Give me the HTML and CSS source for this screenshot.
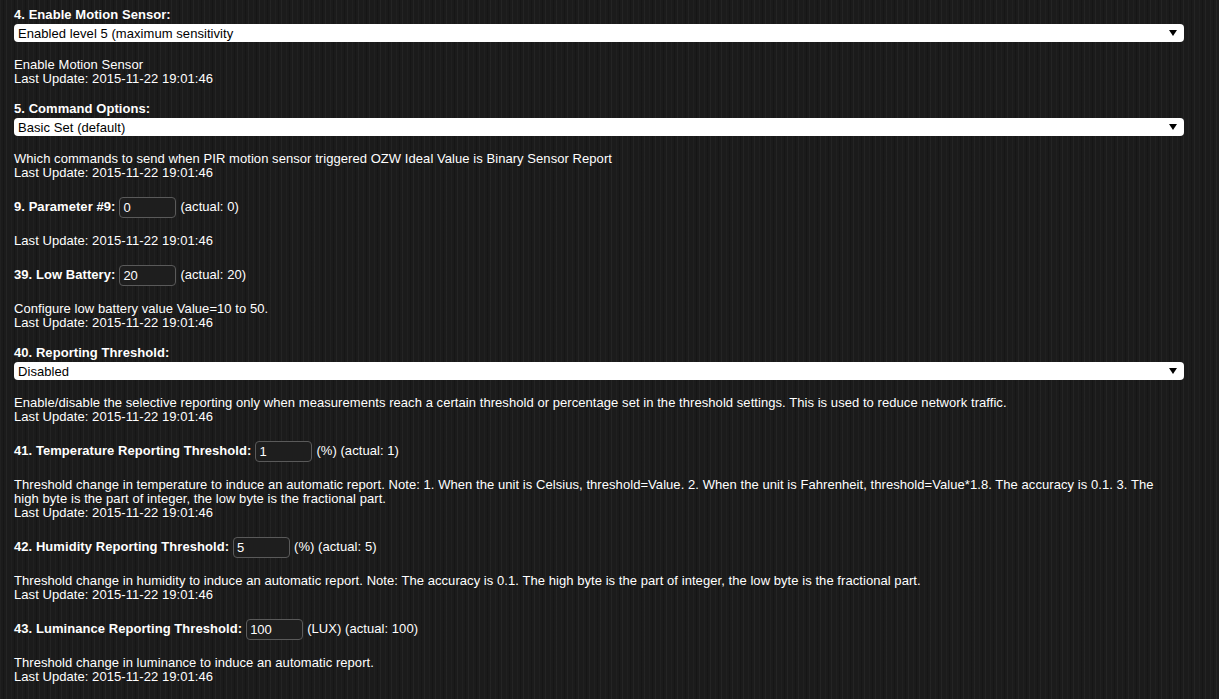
FILE: index.html
```html
<!DOCTYPE html>
<html lang="en">
<head>
    <meta charset="UTF-8">
    <title>Node Configuration</title>
    <link rel="stylesheet" href="styles.css">
</head>
<body>
    <div class="config">
        <div class="param">
            <label class="param-title" for="p4">4. Enable Motion Sensor:</label>
            <div class="select-wrap">
                <select id="p4" class="param-select">
                    <option>Enabled level 5 (maximum sensitivity</option>
                </select>
            </div>
            <p class="param-help">Enable Motion Sensor<br>Last Update: 2015-11-22 19:01:46</p>
        </div>

        <div class="param">
            <label class="param-title" for="p5">5. Command Options:</label>
            <div class="select-wrap">
                <select id="p5" class="param-select">
                    <option>Basic Set (default)</option>
                </select>
            </div>
            <p class="param-help">Which commands to send when PIR motion sensor triggered OZW Ideal Value is Binary Sensor Report<br>Last Update: 2015-11-22 19:01:46</p>
        </div>

        <div class="param">
            <div class="param-row">
                <label class="param-title" for="p9">9. Parameter #9:</label>
                <input id="p9" class="param-input" type="text" value="0">
                <span class="param-unit">(actual: 0)</span>
            </div>
            <p class="param-help">Last Update: 2015-11-22 19:01:46</p>
        </div>

        <div class="param">
            <div class="param-row">
                <label class="param-title" for="p39">39. Low Battery:</label>
                <input id="p39" class="param-input" type="text" value="20">
                <span class="param-unit">(actual: 20)</span>
            </div>
            <p class="param-help">Configure low battery value Value=10 to 50.<br>Last Update: 2015-11-22 19:01:46</p>
        </div>

        <div class="param">
            <label class="param-title" for="p40">40. Reporting Threshold:</label>
            <div class="select-wrap">
                <select id="p40" class="param-select">
                    <option>Disabled</option>
                </select>
            </div>
            <p class="param-help">Enable/disable the selective reporting only when measurements reach a certain threshold or percentage set in the threshold settings. This is used to reduce network traffic.<br>Last Update: 2015-11-22 19:01:46</p>
        </div>

        <div class="param">
            <div class="param-row">
                <label class="param-title" for="p41">41. Temperature Reporting Threshold:</label>
                <input id="p41" class="param-input" type="text" value="1">
                <span class="param-unit">(%) (actual: 1)</span>
            </div>
            <p class="param-help">Threshold change in temperature to induce an automatic report. Note: 1. When the unit is Celsius, threshold=Value. 2. When the unit is Fahrenheit, threshold=Value*1.8. The accuracy is 0.1. 3. The high byte is the part of integer, the low byte is the fractional part.<br>Last Update: 2015-11-22 19:01:46</p>
        </div>

        <div class="param">
            <div class="param-row">
                <label class="param-title" for="p42">42. Humidity Reporting Threshold:</label>
                <input id="p42" class="param-input" type="text" value="5">
                <span class="param-unit">(%) (actual: 5)</span>
            </div>
            <p class="param-help">Threshold change in humidity to induce an automatic report. Note: The accuracy is 0.1. The high byte is the part of integer, the low byte is the fractional part.<br>Last Update: 2015-11-22 19:01:46</p>
        </div>

        <div class="param">
            <div class="param-row">
                <label class="param-title" for="p43">43. Luminance Reporting Threshold:</label>
                <input id="p43" class="param-input" type="text" value="100">
                <span class="param-unit">(LUX) (actual: 100)</span>
            </div>
            <p class="param-help">Threshold change in luminance to induce an automatic report.<br>Last Update: 2015-11-22 19:01:46</p>
        </div>
    </div>
</body>
</html>
```

FILE: styles.css
```css
body {
    margin: 0;
    background-color: #1b1b1b;
    background-image: repeating-linear-gradient(90deg, rgba(255,255,255,0.025) 0px, rgba(255,255,255,0.025) 1px, transparent 1px, transparent 3px, rgba(0,0,0,0.18) 3px, rgba(0,0,0,0.18) 4px, transparent 4px, transparent 6px, rgba(255,255,255,0.04) 6px, rgba(255,255,255,0.04) 7px, transparent 7px, transparent 11px);
    color: #fff;
    font-family: "Liberation Sans", Arial, sans-serif;
    font-size: 13px;
    line-height: 14px;
    letter-spacing: 0.06px;
}
.config {
    width: 1170px;
    padding: 8px 0 0 14px;
}
.param {
    margin-bottom: 16px;
}
.param-title {
    display: block;
    font-weight: bold;
}
.select-wrap {
    position: relative;
    margin-top: 2px;
}
.select-wrap::after {
    content: "";
    position: absolute;
    right: 7px;
    top: 6px;
    border-left: 4px solid transparent;
    border-right: 4px solid transparent;
    border-top: 6px solid #000;
}
.param-select {
    display: block;
    width: 100%;
    height: 18px;
    margin: 0;
    padding: 0 4px;
    border: none;
    border-radius: 4px;
    background: #fff;
    color: #000;
    font-family: inherit;
    font-size: 13px;
    letter-spacing: 0.06px;
    -webkit-appearance: none;
    appearance: none;
}
.param-row {
    display: flex;
    align-items: center;
    height: 22px;
}
.param-row .param-title {
    display: inline;
}
.param-input {
    width: 57px;
    height: 21px;
    box-sizing: border-box;
    margin: 0 4px;
    padding: 0 3px;
    border: 1px solid #5a5a5a;
    border-radius: 4px;
    background: #1e1e1e;
    color: #fff;
    font-family: inherit;
    font-size: 13px;
}
.param-help {
    max-width: 1160px;
    margin: 16px 0 0;
}
```
